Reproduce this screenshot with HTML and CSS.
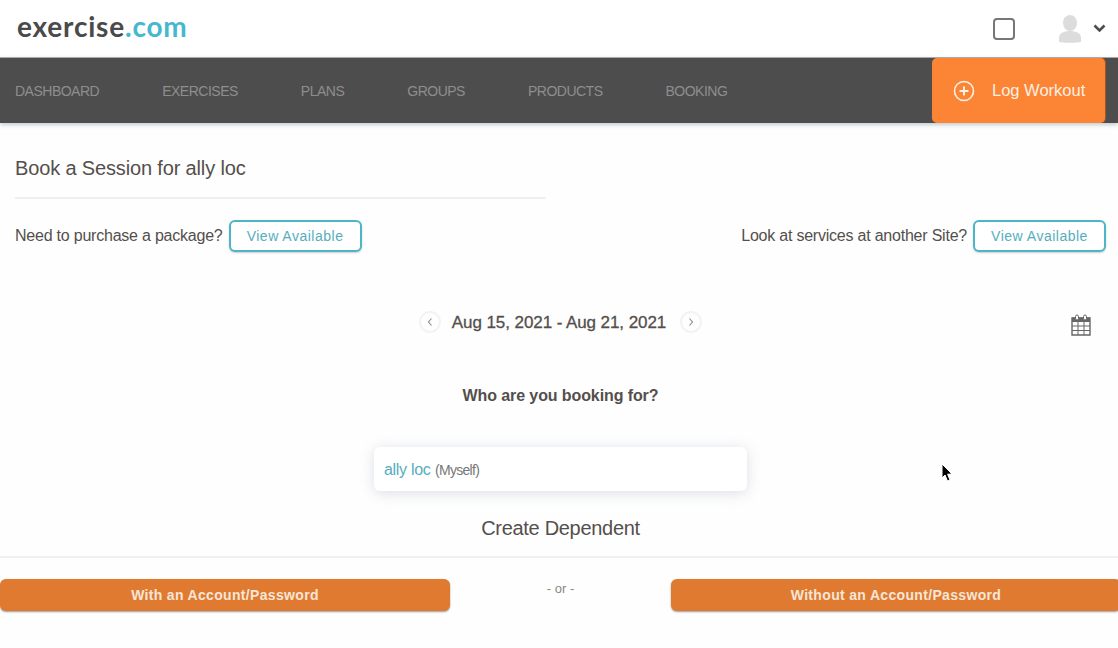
FILE: index.html
```html
<!DOCTYPE html>
<html lang="en">
<head>
    <meta charset="UTF-8">
    <meta name="viewport" content="width=device-width, initial-scale=1.0">
    <title>Book a Session</title>
    <link rel="stylesheet" href="styles.css">
</head>
<body>

    <header class="topbar">
        <div class="logo">exercise<span class="logo-accent">.com</span></div>
        <div class="topbar-right">
            <span class="checkbox"></span>
            <svg class="avatar" width="24" height="28" viewBox="0 0 24 28">
                <ellipse cx="12" cy="8" rx="7" ry="8" fill="#dcdcdc"/>
                <path d="M1 27 V23 C1 18 6 16 12 16 C18 16 23 18 23 23 V27 C18 28 6 28 1 27 Z" fill="#dcdcdc"/>
            </svg>
            <svg class="caret" width="13" height="9" viewBox="0 0 13 9">
                <path d="M1.5 1.5 L6.5 6.5 L11.5 1.5" fill="none" stroke="#4d4d4d" stroke-width="2.6"/>
            </svg>
        </div>
    </header>

    <nav class="navbar">
        <div class="nav-links">
            <a class="nav-link">DASHBOARD</a>
            <a class="nav-link">EXERCISES</a>
            <a class="nav-link">PLANS</a>
            <a class="nav-link">GROUPS</a>
            <a class="nav-link">PRODUCTS</a>
            <a class="nav-link">BOOKING</a>
        </div>
        <button class="log-workout">
            <svg width="22" height="22" viewBox="0 0 22 22">
                <circle cx="11" cy="11" r="9.5" fill="none" stroke="#fdf0e2" stroke-width="1.6"/>
                <path d="M11 6.5 V15.5 M6.5 11 H15.5" stroke="#fdf0e2" stroke-width="2"/>
            </svg>
            <span>Log Workout</span>
        </button>
    </nav>

    <main class="content">
        <h2 class="page-title">Book a Session for ally loc</h2>

        <div class="offer-row">
            <div class="offer">
                <span>Need to purchase a package?</span>
                <button class="outline-button">View Available</button>
            </div>
            <div class="offer">
                <span>Look at services at another Site?</span>
                <button class="outline-button">View Available</button>
            </div>
        </div>

        <div class="date-row">
            <span class="date-arrow">
                <svg width="8" height="10" viewBox="0 0 8 10"><path d="M5.5 1.5 L2.5 5 L5.5 8.5" fill="none" stroke="#888" stroke-width="1.1"/></svg>
            </span>
            <span class="date-label">Aug 15, 2021 - Aug 21, 2021</span>
            <span class="date-arrow">
                <svg width="8" height="10" viewBox="0 0 8 10"><path d="M2.5 1.5 L5.5 5 L2.5 8.5" fill="none" stroke="#888" stroke-width="1.1"/></svg>
            </span>
            <svg class="calendar" width="20" height="22" viewBox="0 0 20 22">
                <path d="M1 4 H19 V21 H1 Z" fill="none" stroke="#666" stroke-width="1.4"/>
                <path d="M1 3.5 H19 V8 H1 Z" fill="#666"/>
                <path d="M1 12 H19 M1 16.5 H19 M7 8 V21 M13 8 V21" stroke="#666" stroke-width="1"/>
                <rect x="4.5" y="1" width="3" height="5" rx="1.5" fill="#fff" stroke="#666"/>
                <rect x="12.5" y="1" width="3" height="5" rx="1.5" fill="#fff" stroke="#666"/>
            </svg>
        </div>

        <h3 class="who-title">Who are you booking for?</h3>

        <div class="person-card">
            <a class="person-name">ally loc</a>
            <span class="person-note">(Myself)</span>
        </div>

        <h3 class="dependent-title">Create Dependent</h3>

        <div class="dependent-row">
            <button class="orange-button">With an Account/Password</button>
            <span class="or-text">- or -</span>
            <button class="orange-button">Without an Account/Password</button>
        </div>
    </main>

    <svg class="cursor" width="12" height="19" viewBox="0 0 12 19">
        <path d="M1 1 V15 L4 12 L6.5 18 L9 17 L6.6 11.2 L11 11 Z" fill="#000" stroke="#fff" stroke-width="1"/>
    </svg>

</body>
</html>
```

FILE: styles.css
```css
html, body {
    margin: 0;
    height: 100%;
}
body {
    position: relative;
    height: 648px;
    overflow: hidden;
    background-color: #fefefe;
    color: #544f4c;
    font-family: "Liberation Sans", Arial, sans-serif;
}
button {
    font-family: inherit;
    cursor: pointer;
}
.topbar {
    display: flex;
    justify-content: space-between;
    align-items: center;
    height: 57px;
    padding: 0 12px 0 17px;
    background-color: #fff;
}
.logo {
    font-family: Lato, sans-serif;
    font-weight: 700;
    font-size: 28px;
    letter-spacing: 0.8px;
    color: #4a4a4a;
    margin-top: -5px;
}
.logo-accent {
    color: #45b8cf;
}
.topbar-right {
    display: flex;
    align-items: center;
}
.checkbox {
    width: 18px;
    height: 18px;
    border: 2px solid #777;
    border-radius: 4px;
    margin-right: 43px;
}
.caret {
    margin-left: 11px;
}
.navbar {
    display: flex;
    justify-content: space-between;
    height: 66px;
    padding: 0 12px 0 15px;
    background-color: #4d4d4d;
    border-top: 1px solid #aaa;
    box-sizing: border-box;
    box-shadow: 0 2px 4px rgba(90, 110, 120, 0.35);
}
.nav-links {
    display: flex;
    align-items: center;
    gap: 63px;
}
.nav-link {
    font-size: 14px;
    letter-spacing: -0.5px;
    color: #8e8e8e;
}
.log-workout {
    display: flex;
    align-items: center;
    gap: 17px;
    width: 174px;
    height: 65px;
    padding: 0 0 0 21px;
    border: none;
    border-right: 1px solid #a9541c;
    border-radius: 5px;
    background-color: #fb8435;
    color: #fdf0e2;
    font-size: 16.5px;
}
.log-workout span {
    margin-top: -1px;
}
.log-workout svg {
    margin-top: 1px;
}
.content {
    display: flex;
    flex-direction: column;
}
.page-title {
    width: 531px;
    height: 54px;
    margin: 22px 0 0 15px;
    border-bottom: 2px solid #f0f0f3;
    box-sizing: border-box;
    font-size: 20px;
    font-weight: normal;
    letter-spacing: -0.15px;
    line-height: 46px;
}
.offer-row {
    display: flex;
    justify-content: space-between;
    margin-top: 21px;
    padding: 0 12px 0 15px;
}
.offer {
    display: flex;
    align-items: center;
    gap: 6px;
    font-size: 16px;
    letter-spacing: -0.22px;
}
.outline-button {
    width: 133px;
    height: 32px;
    padding: 0;
    border: 2px solid #4db6c6;
    border-radius: 6px;
    background-color: #fff;
    box-shadow: 0 1px 2px rgba(0, 0, 0, 0.2);
    color: #56adbe;
    font-size: 14px;
    letter-spacing: 0.5px;
}
.date-row {
    position: relative;
    display: flex;
    justify-content: center;
    align-items: center;
    gap: 11px;
    height: 24px;
    margin-top: 58px;
    padding-left: 3px;
}
.date-label {
    margin: 2px 3px 0 0;
    font-size: 17px;
    letter-spacing: -0.08px;
    -webkit-text-stroke: 0.3px #544f4c;
}
.date-arrow {
    display: flex;
    justify-content: center;
    align-items: center;
    width: 18px;
    height: 18px;
    border: 2px solid #f3f3f6;
    border-radius: 50%;
}
.calendar {
    position: absolute;
    top: 4px;
    right: 27px;
}
.who-title {
    margin: 52px 0 0;
    padding-left: 3px;
    font-size: 16px;
    letter-spacing: -0.1px;
    line-height: 20px;
    text-align: center;
}
.person-card {
    width: 353px;
    height: 44px;
    margin: 41px 0 0 374px;
    padding-left: 10px;
    padding-right: 10px;
    border-radius: 6px;
    background-color: #fff;
    box-shadow: 0 2px 14px rgba(100, 110, 140, 0.22);
    line-height: 46px;
}
.person-name {
    font-size: 16px;
    letter-spacing: -0.3px;
    color: #56adbe;
}
.person-note {
    font-size: 14px;
    letter-spacing: -0.7px;
    color: #777;
}
.dependent-title {
    height: 43px;
    margin: 24px 0 0;
    padding: 1px 0 0 3px;
    border-bottom: 2px solid #f0f0f3;
    box-sizing: border-box;
    font-size: 20px;
    font-weight: normal;
    letter-spacing: -0.3px;
    line-height: 24px;
    text-align: center;
}
.dependent-row {
    display: flex;
    justify-content: space-between;
    margin-top: 21px;
}
.orange-button {
    flex: 0 0 450px;
    height: 32px;
    padding: 0;
    border: none;
    border-radius: 6px;
    background-color: #e07a30;
    box-shadow: 0 1px 2px rgba(0, 0, 0, 0.4);
    color: #f6e6d8;
    font-size: 14px;
    font-weight: bold;
    letter-spacing: 0.33px;
}
.orange-button:last-child {
    margin-right: -3px;
}
.or-text {
    margin-top: 2px;
    font-size: 13px;
    color: #888;
}
.cursor {
    position: absolute;
    left: 941px;
    top: 463px;
}
```
